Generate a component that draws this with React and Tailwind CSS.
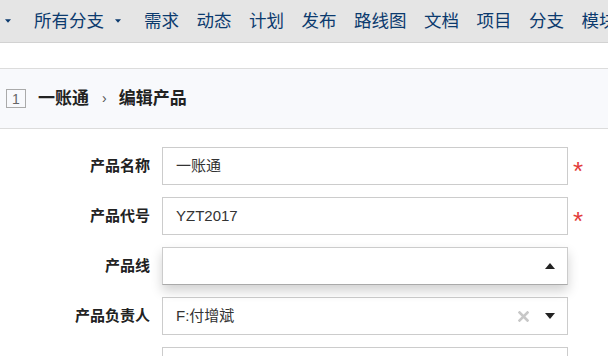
import React from 'react';

const navItems = ['需求', '动态', '计划', '发布', '路线图', '文档', '项目', '分支', '模块'];

const Caret = ({ up = false, w = 10, h = 6, className = '' }) => (
  <svg width={w} height={h} viewBox="0 0 10 6" className={`shrink-0 ${className}`}>
    {up ? <path d="M0 6 L5 0 L10 6 Z" fill="currentColor" /> : <path d="M0 0 L10 0 L5 6 Z" fill="currentColor" />}
  </svg>
);

const Field = ({ label, children, required }) => (
  <div className="flex items-center h-[38px]">
    <div className="w-[150px] text-right font-bold text-[15px] text-[#222]">{label}</div>
    <div className="ml-[12px] w-[406px] h-full">{children}</div>
    {required && <span className="ml-[5px] text-[26px] leading-none text-[#e33b3b] pt-[10px]">*</span>}
  </div>
);

export default function App() {
  return (
    <div
      className="w-[608px] h-[356px] overflow-hidden bg-white"
      style={{ fontFamily: '"Liberation Sans", "Noto Sans CJK SC", sans-serif' }}
    >
      {/* top nav */}
      <div className="h-[43px] bg-[#e5e5e5] border-b border-[#d2d2d2] flex items-center whitespace-nowrap text-[#0b3a6e] text-[17.5px]">
        <Caret w={6} h={4} className="ml-[5px]" />
        <span className="ml-[23px] flex items-center">
          所有分支
          <Caret w={6} h={4} className="ml-[11px]" />
        </span>
        <div className="flex ml-[23px] gap-[17.5px]">
          {navItems.map((n) => (
            <span key={n}>{n}</span>
          ))}
        </div>
      </div>

      <div className="h-[25px]" />

      {/* breadcrumb */}
      <div className="h-[61px] bg-[#f8f9fc] border-y border-[#dcdcdc] flex items-center">
        <span className="ml-[6px] w-[20px] h-[19px] border border-[#aaa] text-[#666] text-[14px] flex items-center justify-center leading-none">
          1
        </span>
        <span className="ml-[12px] font-bold text-[17px] text-[#222]">一账通</span>
        <span className="ml-[13px] text-[#555] text-[14px]">›</span>
        <span className="ml-[12px] font-bold text-[17px] text-[#222]">编辑产品</span>
      </div>

      {/* form */}
      <div className="mt-[18px] flex flex-col gap-[12px]">
        <Field label="产品名称" required>
          <div className="h-full border border-[#ccc] flex items-center pl-[13px] text-[15px] text-[#333]">一账通</div>
        </Field>
        <Field label="产品代号" required>
          <div className="h-full border border-[#ccc] flex items-center pl-[13px] text-[15px] text-[#333]">YZT2017</div>
        </Field>
        <Field label="产品线">
          <div className="relative h-full border border-[#ccc] border-b-[#aaa] shadow-[0_6px_12px_rgba(0,0,0,0.18)] flex items-center justify-end pr-[12px] text-[#222]">
            <Caret up />
          </div>
        </Field>
        <Field label="产品负责人">
          <div className="h-full border border-[#ccc] flex items-center pl-[13px] pr-[12px] text-[15px] text-[#333]">
            <span className="flex-1">F:付增斌</span>
            <svg width="11" height="11" viewBox="0 0 11 11" className="mr-[16px] shrink-0">
              <path d="M1.5 1.5 L9.5 9.5 M9.5 1.5 L1.5 9.5" stroke="#c8c8c8" strokeWidth="2.6" strokeLinecap="square" />
            </svg>
            <Caret className="text-[#222]" />
          </div>
        </Field>
        <Field label="">
          <div className="h-full border border-[#ccc]" />
        </Field>
      </div>
    </div>
  );
}
